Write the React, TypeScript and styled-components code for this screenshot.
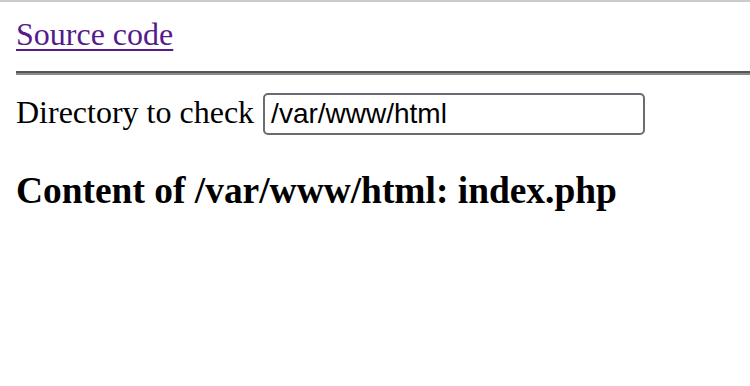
import styled, { createGlobalStyle } from "styled-components";

const GlobalStyle = createGlobalStyle`
  html, body {
    margin: 0;
    padding: 0;
    background: #ffffff;
  }
`;

export default function App() {
  return (
    <>
      <GlobalStyle />
      <Page>
        <SourceLink href="#source">Source code</SourceLink>
        <Rule />
        <CheckForm onSubmit={(e) => e.preventDefault()}>
          <Label htmlFor="dir">Directory to check</Label>
          <DirInput id="dir" name="dir" defaultValue="/var/www/html" />
        </CheckForm>
        <Result>Content of /var/www/html: index.php</Result>
      </Page>
    </>
  );
}

const Page = styled.div`
  border-top: 2px solid #cbcbcb;
  padding: 14px 0 0 16px;
  font-family: "Liberation Serif", "Times New Roman", serif;
  font-size: 32px;
  color: #000;
`;

const SourceLink = styled.a`
  display: inline-block;
  line-height: normal;
  color: #551a8b;
  text-decoration: underline;
  text-decoration-thickness: 2px;
  text-underline-offset: 4px;
`;

const Rule = styled.hr`
  height: 0;
  margin: 18px 0 0 0;
  border: none;
  border-top: 2px solid #565656;
  border-bottom: 2px solid #8a8a8a;
`;

const CheckForm = styled.form`
  display: flex;
  align-items: baseline;
  margin: 18px 0 0 0;
  line-height: normal;
`;

const Label = styled.label`
  font-size: 32px;
`;

const DirInput = styled.input`
  box-sizing: border-box;
  width: 382px;
  height: 42px;
  margin-left: 9px;
  padding: 0 6px;
  border: 2px solid #6b6b73;
  border-radius: 5px;
  font-family: "Liberation Sans", Arial, sans-serif;
  font-size: 28px;
  color: #000;
  background: #fff;
  outline: none;
`;

const Result = styled.h3`
  margin: 34px 0 0 0;
  font-size: 37.44px;
  font-weight: 700;
  line-height: normal;
`;
